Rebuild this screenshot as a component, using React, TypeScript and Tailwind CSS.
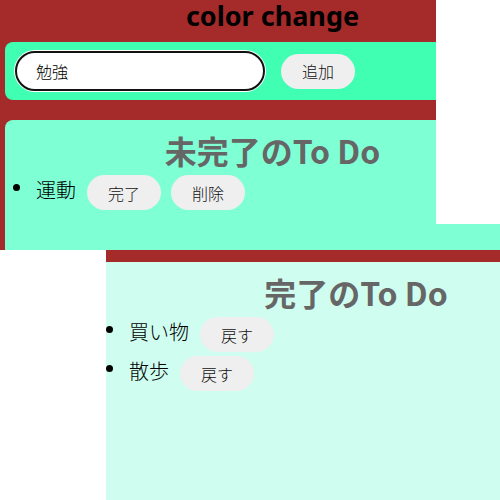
import React from "react";

const cjk = { fontFamily: '"Noto Sans CJK JP", "Noto Sans", sans-serif' };

function Btn({ label }: { label: string }) {
  return (
    <button
      className="h-[35px] px-[21px] rounded-full bg-[#efefef] text-[16px] font-light text-[#111] leading-none shrink-0"
      style={cjk}
    >
      {label}
    </button>
  );
}

function Item({ text, buttons, bulletPad }: { text: string; buttons: string[]; bulletPad: string }) {
  return (
    <li className="flex items-center h-[35px]">
      <span className={`w-[7px] h-[7px] rounded-full bg-black mb-[10px] shrink-0 ${bulletPad}`} />
      <span className="ml-[16px] text-[20px] font-light text-black leading-none pb-[6px] mr-[11px]" style={cjk}>
        {text}
      </span>
      <div className="flex gap-[10px]">
        {buttons.map((b) => (
          <Btn key={b} label={b} />
        ))}
      </div>
    </li>
  );
}

export default function App() {
  return (
    <div className="relative w-[500px] h-[500px] overflow-hidden bg-white">
      <div className="w-[545px] h-[250px] bg-[#a52a2a] px-[5px] flex flex-col">
        <h1
          className="w-[490px] pl-[45px] h-[42px] text-center text-[27px] font-bold text-black leading-[32px]"
          style={{ fontFamily: '"Noto Sans", sans-serif' }}
        >
          color change
        </h1>
        <div className="h-[58px] rounded-lg bg-[#40ffb3] flex items-center pl-[10px] gap-[16px]">
          <input
            defaultValue="勉強"
            className="w-[250px] h-[40px] rounded-full border-2 border-[#111] ring-1 ring-white bg-white pl-[19px] text-[16px] font-light text-black outline-none"
            style={cjk}
          />
          <Btn label="追加" />
        </div>
        <div className="mt-[20px] h-[130px] rounded-t-lg bg-[#7fffd4]">
          <h2
            className="h-[55px] pt-[10px] text-center text-[32px] font-bold text-[#666] leading-[40px]"
            style={cjk}
          >
            未完了のTo Do
          </h2>
          <ul className="flex flex-col gap-[4px]">
            <Item text="運動" buttons={["完了", "削除"]} bulletPad="ml-[8px]" />
          </ul>
        </div>
      </div>
      <div className="ml-[106px] w-[500px] bg-[#a52a2a] pt-[12px]">
        <div className="h-[238px] bg-[#cffdf0]">
          <h2
            className="h-[55px] pt-[10px] text-center text-[32px] font-bold text-[#666] leading-[40px]"
            style={cjk}
          >
            完了のTo Do
          </h2>
          <ul className="flex flex-col gap-[4px]">
            <Item text="買い物" buttons={["戻す"]} bulletPad="ml-0" />
            <Item text="散歩" buttons={["戻す"]} bulletPad="ml-0" />
          </ul>
        </div>
      </div>
      <div className="absolute top-0 left-[436px] w-[64px] h-[224px] bg-white" />
    </div>
  );
}
